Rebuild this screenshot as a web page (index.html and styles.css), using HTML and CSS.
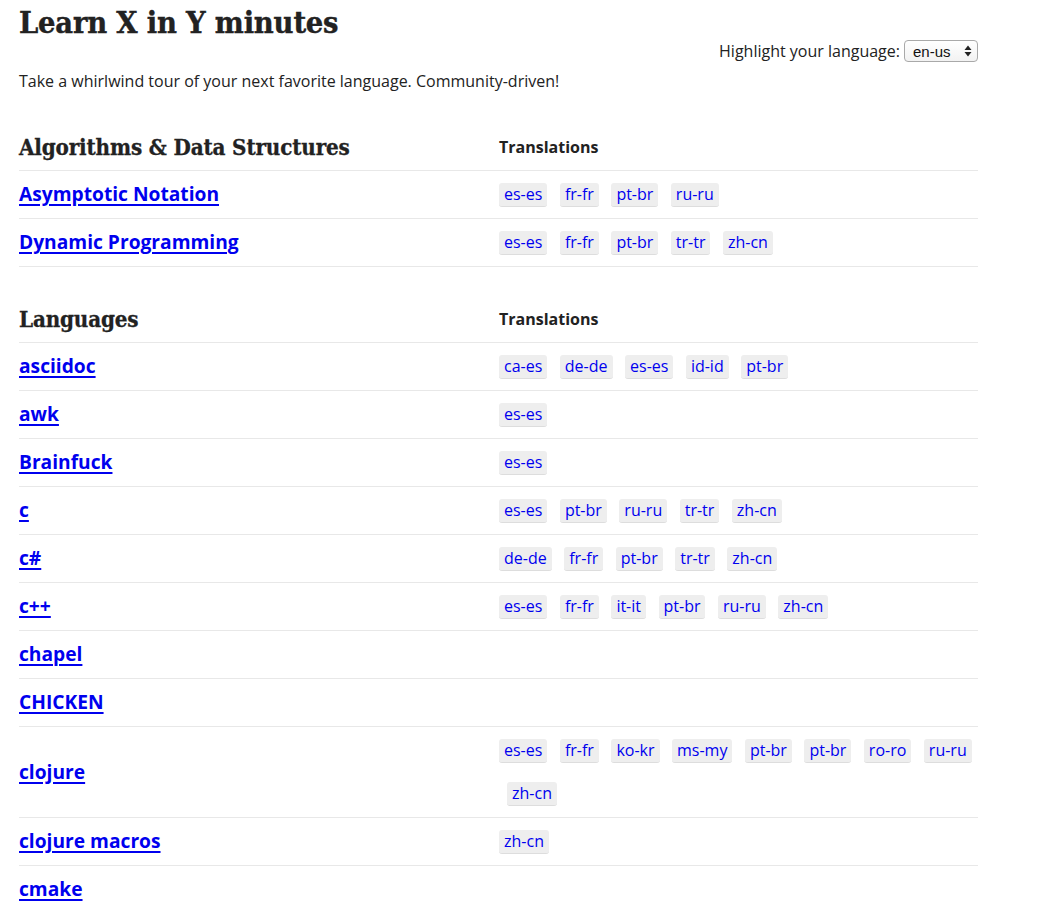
FILE: index.html
```html
<!DOCTYPE html>
<html lang="en">
<head>
<meta charset="utf-8">
<title>Learn X in Y minutes</title>
<link rel="stylesheet" href="styles.css">
</head>
<body>
<div class="page">
  <header class="masthead">
    <h1 class="title">Learn X in Y minutes</h1>
    <div class="highlight">
      <label class="highlight-label" for="lang">Highlight your language:</label>
      <span class="select-wrap">
        <select id="lang" class="select"><option>en-us</option></select>
        <svg class="select-arrows" width="8" height="12" viewBox="0 0 8 12"><path d="M4 0.5 L7.5 5 L0.5 5 Z M4 11.5 L7.5 7 L0.5 7 Z" fill="#222"/></svg>
      </span>
    </div>
    <p class="tagline">Take a whirlwind tour of your next favorite language. Community-driven!</p>
  </header>

  <section class="section">
    <div class="row row-head">
      <h2 class="section-title">Algorithms &amp; Data Structures</h2>
      <div class="col-head">Translations</div>
    </div>
    <div class="row">
      <a class="topic" href="#">Asymptotic Notation</a>
      <div class="tags"><a class="tag" href="#">es-es</a><a class="tag" href="#">fr-fr</a><a class="tag" href="#">pt-br</a><a class="tag" href="#">ru-ru</a></div>
    </div>
    <div class="row">
      <a class="topic" href="#">Dynamic Programming</a>
      <div class="tags"><a class="tag" href="#">es-es</a><a class="tag" href="#">fr-fr</a><a class="tag" href="#">pt-br</a><a class="tag" href="#">tr-tr</a><a class="tag" href="#">zh-cn</a></div>
    </div>
    <div class="row-end"></div>
  </section>

  <section class="section">
    <div class="row row-head">
      <h2 class="section-title">Languages</h2>
      <div class="col-head">Translations</div>
    </div>
    <div class="row">
      <a class="topic" href="#">asciidoc</a>
      <div class="tags"><a class="tag" href="#">ca-es</a><a class="tag" href="#">de-de</a><a class="tag" href="#">es-es</a><a class="tag" href="#">id-id</a><a class="tag" href="#">pt-br</a></div>
    </div>
    <div class="row">
      <a class="topic" href="#">awk</a>
      <div class="tags"><a class="tag" href="#">es-es</a></div>
    </div>
    <div class="row">
      <a class="topic" href="#">Brainfuck</a>
      <div class="tags"><a class="tag" href="#">es-es</a></div>
    </div>
    <div class="row">
      <a class="topic" href="#">c</a>
      <div class="tags"><a class="tag" href="#">es-es</a><a class="tag" href="#">pt-br</a><a class="tag" href="#">ru-ru</a><a class="tag" href="#">tr-tr</a><a class="tag" href="#">zh-cn</a></div>
    </div>
    <div class="row">
      <a class="topic" href="#">c#</a>
      <div class="tags"><a class="tag" href="#">de-de</a><a class="tag" href="#">fr-fr</a><a class="tag" href="#">pt-br</a><a class="tag" href="#">tr-tr</a><a class="tag" href="#">zh-cn</a></div>
    </div>
    <div class="row">
      <a class="topic" href="#">c++</a>
      <div class="tags"><a class="tag" href="#">es-es</a><a class="tag" href="#">fr-fr</a><a class="tag" href="#">it-it</a><a class="tag" href="#">pt-br</a><a class="tag" href="#">ru-ru</a><a class="tag" href="#">zh-cn</a></div>
    </div>
    <div class="row">
      <a class="topic" href="#">chapel</a>
      <div class="tags"></div>
    </div>
    <div class="row">
      <a class="topic" href="#">CHICKEN</a>
      <div class="tags"></div>
    </div>
    <div class="row">
      <a class="topic" href="#">clojure</a>
      <div class="tags"><a class="tag" href="#">es-es</a><a class="tag" href="#">fr-fr</a><a class="tag" href="#">ko-kr</a><a class="tag" href="#">ms-my</a><a class="tag" href="#">pt-br</a><a class="tag" href="#">pt-br</a><a class="tag" href="#">ro-ro</a><a class="tag" href="#">ru-ru</a><a class="tag tag-wrapped" href="#">zh-cn</a></div>
    </div>
    <div class="row">
      <a class="topic" href="#">clojure macros</a>
      <div class="tags"><a class="tag" href="#">zh-cn</a></div>
    </div>
    <div class="row">
      <a class="topic" href="#">cmake</a>
      <div class="tags"></div>
    </div>
  </section>
</div>
</body>
</html>
```

FILE: styles.css
```css
html, body {
  margin: 0;
  padding: 0;
  background: #fff;
}

body {
  font-family: "Open Sans", "Liberation Sans", sans-serif;
  color: #222;
}

.page {
  width: 959px;
  margin-left: 19px;
}

.masthead {
  display: flex;
  flex-direction: column;
}

.title {
  margin: 0;
  font-family: "DejaVu Serif Condensed", "DejaVu Serif", serif;
  font-stretch: condensed;
  font-weight: 900;
  font-size: 30.5px;
  line-height: 44px;
  height: 40px;
  color: #222;
  letter-spacing: -0.2px;
  -webkit-text-stroke: 0.4px #222;
}

.highlight {
  display: flex;
  justify-content: flex-end;
  align-items: center;
  gap: 4px;
  height: 22px;
}

.highlight-label {
  font-size: 16px;
  color: #222;
}

.select-wrap {
  position: relative;
  display: inline-flex;
}

.select {
  appearance: none;
  -webkit-appearance: none;
  width: 74px;
  height: 22px;
  margin: 0;
  padding: 0 0 0 8px;
  border: 1px solid #a9a9a9;
  border-radius: 4px;
  background: linear-gradient(#ffffff, #f2f2f2);
  font-family: "Liberation Sans", "Helvetica", sans-serif;
  font-size: 15px;
  color: #111;
}

.select-arrows {
  position: absolute;
  right: 6px;
  top: 5px;
  pointer-events: none;
}

.tagline {
  margin: 8px 0 0;
  font-size: 16px;
  line-height: 22px;
}

.section {
  margin-top: 28px;
}

.section:first-of-type {
  margin-top: 31px;
}

.row {
  display: flex;
  align-items: center;
  min-height: 47px;
  border-top: 1px solid #e8e8e8;
  box-sizing: border-box;
}

.row-head {
  border-top: none;
  height: 47px;
}

.row-end {
  border-top: 1px solid #e8e8e8;
}

.section-title {
  width: 480px;
  flex: none;
  margin: 0;
  font-family: "DejaVu Serif Condensed", "DejaVu Serif", serif;
  font-stretch: condensed;
  font-weight: bold;
  font-size: 22.2px;
  color: #222;
  letter-spacing: -0.15px;
  -webkit-text-stroke: 0.3px #222;
}

.col-head {
  font-weight: bold;
  font-size: 16px;
  color: #222;
}

.topic {
  width: 480px;
  flex: none;
  margin-top: -2px;
  font-weight: bold;
  font-size: 19.2px;
  color: #0000ee;
  text-decoration: underline;
  text-decoration-thickness: 2px;
  text-underline-offset: 3px;
}

.tags {
  display: flex;
  flex-wrap: wrap;
  column-gap: 12.5px;
  row-gap: 19px;
  padding: 12px 0 11px;
  min-height: 24px;
}

.tag {
  display: inline-block;
  height: 23px;
  line-height: 23px;
  padding: 0 5px;
  background: #eeeeee;
  border-bottom: 1px solid #dddddd;
  border-radius: 3px;
  font-size: 16px;
  color: #0000ee;
  text-decoration: none;
}

.tag-wrapped {
  margin-left: 8px;
}
```
